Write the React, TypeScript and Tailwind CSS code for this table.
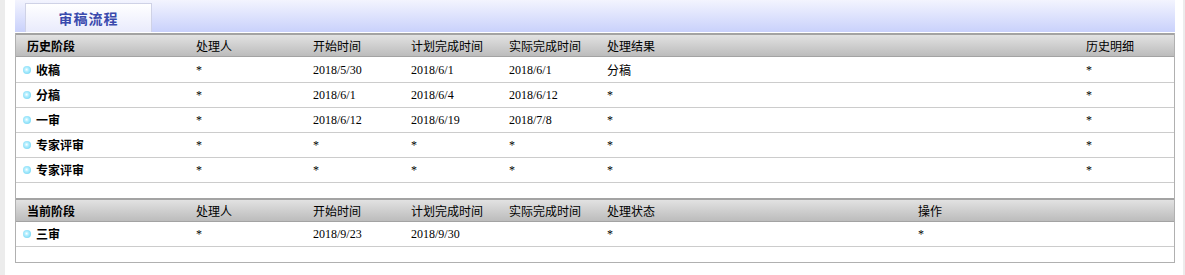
import React from "react";

const CJK = "font-['SimSun','Noto_Sans_CJK_SC',sans-serif]";
const SERIF = "font-['Liberation_Serif','Noto_Sans_CJK_SC',serif]";

const HIST_COLS = "grid-cols-[180px_117px_98px_98px_98px_479px_1fr]";
const CUR_COLS = "grid-cols-[180px_117px_98px_98px_98px_311px_1fr]";

type Row = { stage: string; cells: string[] };

const history: Row[] = [
  { stage: "收稿", cells: ["*", "2018/5/30", "2018/6/1", "2018/6/1", "分稿", "*"] },
  { stage: "分稿", cells: ["*", "2018/6/1", "2018/6/4", "2018/6/12", "*", "*"] },
  { stage: "一审", cells: ["*", "2018/6/12", "2018/6/19", "2018/7/8", "*", "*"] },
  { stage: "专家评审", cells: ["*", "*", "*", "*", "*", "*"] },
  { stage: "专家评审", cells: ["*", "*", "*", "*", "*", "*"] },
];

const current: Row[] = [
  { stage: "三审", cells: ["*", "2018/9/23", "2018/9/30", "", "*", "*"] },
];

const Dot = () => (
  <span className="inline-block w-[8px] h-[8px] rounded-full bg-[radial-gradient(circle_at_45%_45%,#ffffff_0%,#b5efff_30%,#5ccdf0_100%)]" />
);

const HeaderRow: React.FC<{ cols: string; labels: string[] }> = ({ cols, labels }) => (
  <div className={`grid ${cols} h-[24px] items-center border-t-2 border-b border-[#a3a3a3] bg-gradient-to-b from-[#e2e2e2] to-[#bcbcbc] text-[12px] text-black ${CJK}`}>
    <div className="pl-[11px] font-bold">{labels[0]}</div>
    {labels.slice(1).map((l, i) => (
      <div key={i}>{l}</div>
    ))}
  </div>
);

const BodyRow: React.FC<{ cols: string; row: Row }> = ({ cols, row }) => (
  <div className={`grid ${cols} h-[25px] items-center border-b border-[#cccccc] text-[12px] text-black`}>
    <div className={`flex items-center gap-[5px] pl-[7px] font-bold ${CJK}`}>
      <Dot />
      <span>{row.stage}</span>
    </div>
    {row.cells.map((c, i) => (
      <div key={i} className={/^[0-9*]/.test(c) ? SERIF : CJK}>
        {c}
      </div>
    ))}
  </div>
);

export default function App() {
  return (
    <div className="flex w-[1185px] h-[275px] bg-white">
      <div className="w-[5px] bg-[#ececec]" />
      <div className="w-[10px]" />
      <div className="w-[1160px] flex flex-col">
        <div className="h-[32px] flex items-end pl-[10px] bg-gradient-to-b from-[#f3f4fe] to-[#c9d1fb]">
          <div className="w-[127px] h-[29px] flex items-center justify-center border border-b-0 border-[#cfd2e6] bg-gradient-to-b from-[#ffffff] to-[#e9ebfc]">
            <span className={`text-[14px] font-bold text-[#3a4aad] tracking-[1px] ${CJK}`}>审稿流程</span>
          </div>
        </div>
        <div className="h-[1px] bg-white" />
        <div className="border-x border-b border-[#b0b0b0]">
          <HeaderRow cols={HIST_COLS} labels={["历史阶段", "处理人", "开始时间", "计划完成时间", "实际完成时间", "处理结果", "历史明细"]} />
          <div className="h-[1px]" />
          {history.map((r, i) => (
            <BodyRow key={i} cols={HIST_COLS} row={r} />
          ))}
          <div className="h-[15px]" />
          <HeaderRow cols={CUR_COLS} labels={["当前阶段", "处理人", "开始时间", "计划完成时间", "实际完成时间", "处理状态", "操作"]} />
          {current.map((r, i) => (
            <BodyRow key={i} cols={CUR_COLS} row={r} />
          ))}
          <div className="h-[15px]" />
        </div>
      </div>
      <div className="w-[8px]" />
      <div className="w-[2px] bg-[#ececec]" />
    </div>
  );
}
